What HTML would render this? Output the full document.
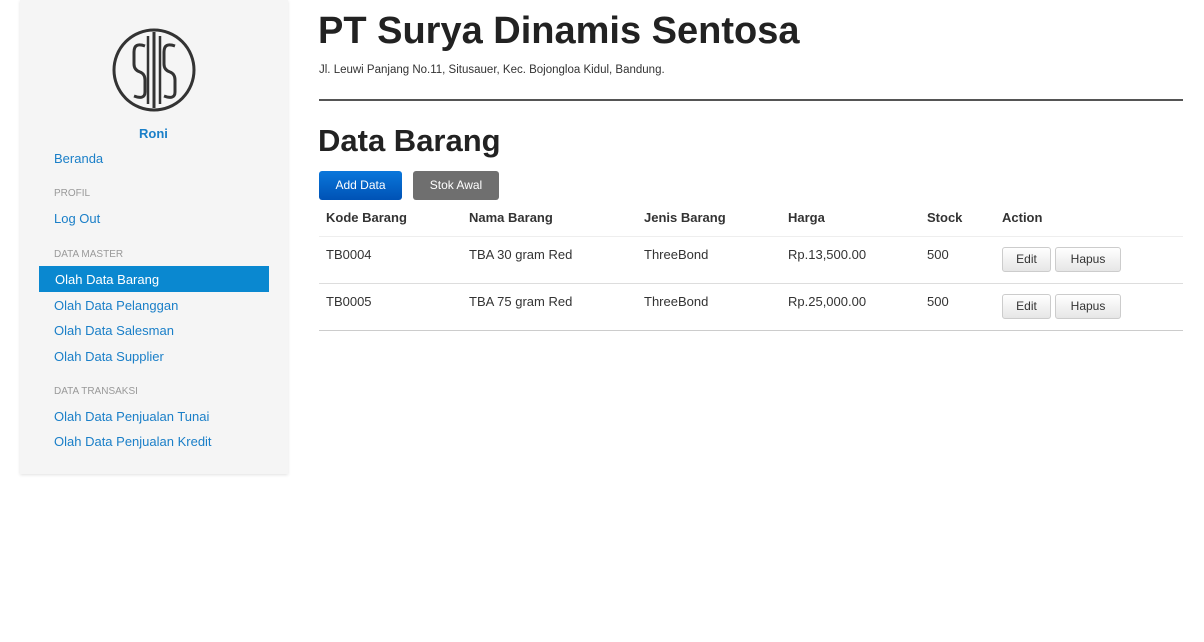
<!DOCTYPE html>
<html><head><style>
*{margin:0;padding:0;box-sizing:border-box}
body{width:1204px;height:642px;background:#fff;font-family:"Liberation Sans",sans-serif;position:relative;overflow:hidden;color:#333}
.side{position:absolute;left:20px;top:0;width:268px;height:474px;background:#f5f5f5;box-shadow:0 1px 3px rgba(0,0,0,.12)}
.a{position:absolute;font-size:13px;color:#1a7fc8}
.h{position:absolute;font-size:10px;color:#999;text-transform:uppercase}
.act{position:absolute;left:39px;top:266px;width:230px;height:26px;background:#0a88d0;color:#fff;font-size:13px;padding:6px 0 0 16px}
.t{position:absolute;font-size:13px;color:#333}
.th{font-weight:bold}
.line{position:absolute;left:319px;width:864px;height:1px;background:#ddd}
.btn{position:absolute;height:25px;border:1px solid #ccc;border-radius:3px;background:linear-gradient(#fff,#e6e6e6);font-size:12px;text-align:center;line-height:23px;color:#333}
</style></head><body>
<div class="side"></div>
<svg style="position:absolute;left:112px;top:28px" width="84" height="84" viewBox="0 0 84 84" fill="none" stroke="#333" stroke-width="3">
<circle cx="42" cy="42" r="40"/>
<path d="M42 4V80"/>
<path d="M36 8V76M48 8V76" stroke-width="2.5"/>
<path d="M33 18Q22 14 22 24V36Q22 42 28 44Q33 46 33 52V64Q33 72 22 68"/>
<path d="M63 18Q52 14 52 24V36Q52 42 58 44Q63 46 63 52V64Q63 72 52 68"/>
</svg>
<div class="a" style="left:139px;top:126px;font-weight:bold">Roni</div>
<div class="a" style="left:54px;top:151px">Beranda</div>
<div class="h" style="left:54px;top:188px">Profil</div>
<div class="a" style="left:54px;top:211px">Log Out</div>
<div class="h" style="left:54px;top:249px">Data Master</div>
<div class="act">Olah Data Barang</div>
<div class="a" style="left:54px;top:298px">Olah Data Pelanggan</div>
<div class="a" style="left:54px;top:323px">Olah Data Salesman</div>
<div class="a" style="left:54px;top:349px">Olah Data Supplier</div>
<div class="h" style="left:54px;top:386px">Data Transaksi</div>
<div class="a" style="left:54px;top:409px">Olah Data Penjualan Tunai</div>
<div class="a" style="left:54px;top:434px">Olah Data Penjualan Kredit</div>

<div style="position:absolute;left:318px;top:10px;font-size:38px;font-weight:bold;color:#222">PT Surya Dinamis Sentosa</div>
<div style="position:absolute;left:319px;top:64px;font-size:11.5px;color:#333">Jl. Leuwi Panjang No.11, Situsauer, Kec. Bojongloa Kidul, Bandung.</div>
<div style="position:absolute;left:319px;top:99px;width:864px;height:2px;background:#555"></div>
<div style="position:absolute;left:318px;top:123px;font-size:31px;font-weight:bold;color:#222">Data Barang</div>
<div style="position:absolute;left:319px;top:171px;width:83px;height:29px;border-radius:3px;background:linear-gradient(#0a77db,#0052b5);color:#fff;font-size:12px;text-align:center;line-height:29px">Add Data</div>
<div style="position:absolute;left:413px;top:171px;width:86px;height:29px;border-radius:3px;background:#6f6f6f;color:#fff;font-size:12px;text-align:center;line-height:29px">Stok Awal</div>

<div class="t th" style="left:326px;top:210px">Kode Barang</div>
<div class="t th" style="left:469px;top:210px">Nama Barang</div>
<div class="t th" style="left:644px;top:210px">Jenis Barang</div>
<div class="t th" style="left:788px;top:210px">Harga</div>
<div class="t th" style="left:927px;top:210px">Stock</div>
<div class="t th" style="left:1002px;top:210px">Action</div>
<div class="line" style="top:236px;background:#eee"></div>
<div class="t" style="left:326px;top:247px">TB0004</div>
<div class="t" style="left:469px;top:247px">TBA 30 gram Red</div>
<div class="t" style="left:644px;top:247px">ThreeBond</div>
<div class="t" style="left:788px;top:247px">Rp.13,500.00</div>
<div class="t" style="left:927px;top:247px">500</div>
<div class="btn" style="left:1002px;top:247px;width:49px">Edit</div>
<div class="btn" style="left:1055px;top:247px;width:66px">Hapus</div>
<div class="line" style="top:283px"></div>
<div class="t" style="left:326px;top:294px">TB0005</div>
<div class="t" style="left:469px;top:294px">TBA 75 gram Red</div>
<div class="t" style="left:644px;top:294px">ThreeBond</div>
<div class="t" style="left:788px;top:294px">Rp.25,000.00</div>
<div class="t" style="left:927px;top:294px">500</div>
<div class="btn" style="left:1002px;top:294px;width:49px">Edit</div>
<div class="btn" style="left:1055px;top:294px;width:66px">Hapus</div>
<div class="line" style="top:330px;background:#ccc"></div>
</body></html>
